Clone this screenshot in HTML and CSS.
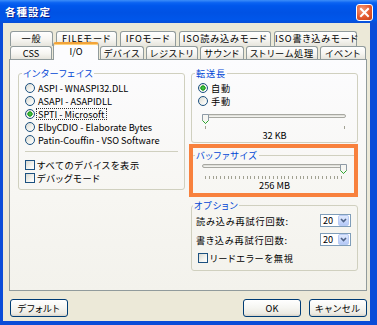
FILE: index.html
```html
<!DOCTYPE html>
<html lang="ja">
<head>
<meta charset="utf-8">
<link rel="stylesheet" href="styles.css">
</head>
<body>
<div class="window">
  <div class="titlebar">
    <span class="title">各種設定</span>
    <span class="close"><svg width="15" height="15" viewBox="0 0 15 15"><path d="M4 4L11 11M11 4L4 11" stroke="#fff" stroke-width="2" stroke-linecap="square"/></svg></span>
  </div>
  <div class="frame">
    <div class="tabs">
      <div class="tabrow back">
        <div class="tab">一般</div>
        <div class="tab">FILEモード</div>
        <div class="tab">IFOモード</div>
        <div class="tab">ISO読み込みモード</div>
        <div class="tab">ISO書き込みモード</div>
      </div>
      <div class="tabrow front">
        <div class="tab en">CSS</div>
        <div class="tab active en">I/O</div>
        <div class="tab">デバイス</div>
        <div class="tab">レジストリ</div>
        <div class="tab">サウンド</div>
        <div class="tab">ストリーム処理</div>
        <div class="tab">イベント</div>
      </div>
    </div>
    <div class="panel">
      <fieldset class="group iface">
        <legend>インターフェイス</legend>
        <div class="opt en"><span class="radio"></span><span>ASPI - WNASPI32.DLL</span></div>
        <div class="opt en"><span class="radio"></span><span>ASAPI - ASAPIDLL</span></div>
        <div class="opt en"><span class="radio on"></span><span class="focus">SPTI - Microsoft</span></div>
        <div class="opt en"><span class="radio"></span><span>ElbyCDIO - Elaborate Bytes</span></div>
        <div class="opt en"><span class="radio"></span><span>Patin-Couffin - VSO Software</span></div>
        <div class="sep"></div>
        <div class="opt"><span class="check"></span><span>すべてのデバイスを表示</span></div>
        <div class="opt"><span class="check"></span><span>デバッグモード</span></div>
      </fieldset>
      <div class="rightcol">
        <fieldset class="group transfer">
          <legend>転送長</legend>
          <div class="opt"><span class="radio on"></span><span>自動</span></div>
          <div class="opt"><span class="radio"></span><span>手動</span></div>
          <div class="slider">
            <div class="track"></div>
            <span class="thumb"><svg width="7" height="10" viewBox="0 0 7 10"><path d="M0.5 0.5H6.5V6.5L3.5 9.5L0.5 6.5Z" fill="#F6F6F2" stroke="#8E9AA6"/><path d="M0.5 6.5L3.5 9.5L6.5 6.5" fill="none" stroke="#2CA82C"/></svg></span>
          </div>
          <div class="ticks ends"></div>
          <div class="value en">32 KB</div>
        </fieldset>
        <div class="buffer-wrap">
          <fieldset class="group buffer">
            <legend>バッファサイズ</legend>
            <div class="slider">
              <div class="track"></div>
              <span class="thumb end"><svg width="7" height="10" viewBox="0 0 7 10"><path d="M0.5 0.5H6.5V6.5L3.5 9.5L0.5 6.5Z" fill="#F6F6F2" stroke="#8E9AA6"/><path d="M0.5 6.5L3.5 9.5L6.5 6.5" fill="none" stroke="#2CA82C"/></svg></span>
            </div>
            <div class="ticks many"></div>
            <div class="value en">256 MB</div>
          </fieldset>
          <div class="highlight"></div>
        </div>
        <fieldset class="group options">
          <legend>オプション</legend>
          <div class="optrow">
            <span>読み込み再試行回数:</span>
            <span class="combo en"><span>20</span><span class="drop"><svg width="7" height="5" viewBox="0 0 7 5"><path d="M1 1L3.5 3.5L6 1" fill="none" stroke="#4D6185" stroke-width="1.6"/></svg></span></span>
          </div>
          <div class="optrow">
            <span>書き込み再試行回数:</span>
            <span class="combo en"><span>20</span><span class="drop"><svg width="7" height="5" viewBox="0 0 7 5"><path d="M1 1L3.5 3.5L6 1" fill="none" stroke="#4D6185" stroke-width="1.6"/></svg></span></span>
          </div>
          <div class="opt chkrow"><span class="check"></span><span>リードエラーを無視</span></div>
        </fieldset>
      </div>
    </div>
    <div class="footer">
      <div class="button">デフォルト</div>
      <div class="spacer"></div>
      <div class="button en">OK</div>
      <div class="button">キャンセル</div>
    </div>
  </div>
</div>
</body>
</html>
```
FILE: styles.css
```css
* { box-sizing: border-box; }
html, body { margin: 0; padding: 0; }
body {
  width: 377px;
  height: 325px;
  overflow: hidden;
  background: #fff;
  color: #000;
  font-family: "Noto Sans CJK JP", "Noto Sans", sans-serif;
  font-size: 9.2px;
  letter-spacing: 0.8px;
  font-feature-settings: "palt";
}
.en { letter-spacing: 0; }
.window {
  width: 377px;
  height: 325px;
  display: flex;
  flex-direction: column;
  background: #0A4CD8;
}
.titlebar {
  height: 23px;
  flex: none;
  display: flex;
  align-items: flex-start;
  justify-content: space-between;
  padding: 0 4px 0 5px;
  background: linear-gradient(180deg, #3D8EF9 0%, #0B63F2 12%, #0057EC 25%, #0052E4 55%, #0056EA 85%, #0A4FD6 100%);
}
.title {
  margin-top: 5px;
  color: #fff;
  font-weight: bold;
  font-size: 10.5px;
  line-height: 14px;
  letter-spacing: 1px;
  text-shadow: 1px 1px 0 #0A1E8C;
}
.close {
  margin-top: 4px;
  width: 17px;
  height: 17px;
  border: 1px solid #fff;
  border-radius: 3px;
  background: radial-gradient(circle at 35% 30%, #F39A78 0%, #E3582D 55%, #C2401C 100%);
  display: flex;
  align-items: center;
  justify-content: center;
}
.frame {
  flex: 1;
  display: flex;
  flex-direction: column;
  background: #ECE9D8;
  border-left: 3px solid #0A4CD8;
  border-right: 7px solid #0A4CD8;
  border-bottom: 4px solid #0A4CD8;
  padding: 8px 3px 4px 6px;
}
.tabs { flex: none; }
.tabrow { display: grid; margin-left: 1px; }
.back {
  height: 15px;
  grid-template-columns: 43px 61px 56px 92px 83px;
  column-gap: 3px;
}
.front {
  height: 13px;
  grid-template-columns: 42px 44px 44px 52px 44px 72px 46px;
  column-gap: 2px;
}
.tab {
  border: 1px solid #919B9C;
  border-bottom: none;
  border-radius: 3px 3px 0 0;
  background: linear-gradient(180deg, #FFFFFF 0%, #F6F5F1 55%, #E6E4DC 100%);
  text-align: center;
  white-space: nowrap;
  line-height: 12px;
}
.tab.active {
  position: relative;
  z-index: 1;
  margin: -4px -1px -1px;
  background: #FCFCFE;
  border-top: 2px solid #F2A33A;
  box-shadow: inset 0 1px 0 #FFD27A;
  line-height: 15px;
}
.panel {
  flex: 1;
  display: flex;
  align-items: flex-start;
  gap: 6px;
  border: 1px solid #919B9C;
  background: linear-gradient(180deg, #FCFCFE 0%, #F7F6F2 60%, #F3F2EC 100%);
  padding: 7px 0 0 8px;
}
.group {
  margin: 0;
  min-width: 0;
  border: 1px solid #D0D0BF;
  border-radius: 3px;
  padding: 2px 6px 5px 6px;
}
.group legend {
  color: #0046D5;
  padding: 0 1px;
  margin-left: -3px;
  line-height: 12px;
}
.iface { width: 167px; }
.rightcol { width: 167px; display: flex; flex-direction: column; }
.opt {
  display: flex;
  align-items: center;
  height: 13px;
  line-height: 12px;
  white-space: nowrap;
}
.radio {
  flex: none;
  width: 10px;
  height: 10px;
  border-radius: 50%;
  border: 1px solid #1C5180;
  background: linear-gradient(135deg, #D8D8D0 0%, #F4F4F0 60%, #FFFFFF 100%);
  margin-right: 3px;
}
.radio.on {
  background: radial-gradient(circle at 50% 50%, #5CCB5C 0, #2BAA2B 1.6px, #21A121 2.4px, rgba(33,161,33,0) 2.9px), linear-gradient(135deg, #D8D8D0 0%, #F4F4F0 60%, #FFFFFF 100%);
}
.check {
  flex: none;
  width: 10px;
  height: 10px;
  border: 1px solid #1C5180;
  background: linear-gradient(135deg, #D8D8D0 0%, #F4F4F0 60%, #FFFFFF 100%);
  margin-right: 2px;
}
.focus {
  border: 1px dotted #333;
  line-height: 10px;
  padding: 0 1px;
  margin-left: -2px;
}
.sep {
  height: 1px;
  background: #D0D0BF;
  margin: 5px 0 6px;
}
.transfer { padding-bottom: 1px; }
.slider {
  position: relative;
  height: 10px;
  margin: 7px 5px 0 4px;
}
.track {
  margin-top: 3px;
  height: 4px;
  border: 1px solid #A8A8A2;
  border-radius: 2px;
  background: #F2F2EE;
  box-shadow: inset 1px 1px 0 #E0E0DA;
}
.thumb {
  position: absolute;
  top: 0;
  left: 0;
  width: 7px;
  height: 10px;
  display: block;
}
.thumb svg { display: block; }
.thumb.end { left: auto; right: -1px; }
.ticks {
  height: 3px;
  margin: 2px 6px 0 7px;
}
.ticks.ends {
  background:
    linear-gradient(#A1A192, #A1A192) left top / 1px 100% no-repeat,
    linear-gradient(#A1A192, #A1A192) right top / 1px 100% no-repeat;
}
.ticks.many {
  background: repeating-linear-gradient(90deg, #A1A192 0, #A1A192 1px, transparent 1px, transparent 3.78px);
}
.value {
  text-align: center;
  line-height: 12px;
}
.buffer-wrap {
  position: relative;
  margin-top: 6px;
}
.buffer { padding-top: 0; padding-bottom: 3px; }
.buffer .slider { margin-top: 3px; }
.highlight {
  position: absolute;
  left: -2px;
  right: 0;
  top: -5px;
  bottom: -2px;
  border: 4px solid #F8813D;
}
.options { margin-top: 4px; padding-left: 4px; }
.optrow {
  display: flex;
  align-items: center;
  justify-content: space-between;
  height: 15px;
  white-space: nowrap;
}
.optrow + .optrow { margin-top: 4px; }
.chkrow { margin-top: 4px; height: 14px; padding-left: 2px; }
.combo {
  width: 31px;
  height: 13px;
  border: 1px solid #7F9DB9;
  background: #fff;
  display: flex;
  align-items: center;
  justify-content: space-between;
  padding: 0 1px 0 2px;
  line-height: 11px;
}
.drop {
  width: 11px;
  height: 11px;
  border: 1px solid #B9CBF3;
  border-radius: 2px;
  background: linear-gradient(180deg, #E0E9FD 0%, #C6D6FA 60%, #B4C8F6 100%);
  display: flex;
  align-items: center;
  justify-content: center;
}
.drop svg { display: block; }
.footer {
  flex: none;
  display: flex;
  gap: 8px;
  height: 18px;
  margin-top: 8px;
  margin-left: 1px;
}
.spacer { flex: 1; }
.button {
  width: 58px;
  height: 18px;
  border: 1px solid #003C74;
  border-radius: 3px;
  background: linear-gradient(180deg, #FFFFFF 0%, #F5F5F1 50%, #ECEAE3 85%, #D8D3C8 100%);
  text-align: center;
  line-height: 16px;
}
```
